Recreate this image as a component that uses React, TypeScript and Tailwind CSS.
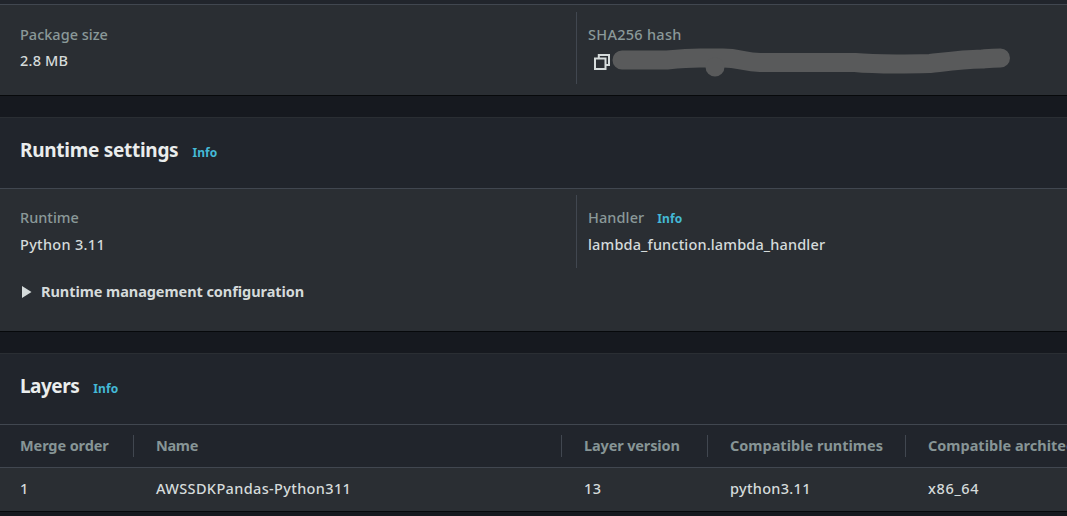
import type { ReactNode } from "react";

function Info({ className = "" }: { className?: string }) {
  return (
    <a className={`text-[12px] leading-4 font-bold tracking-[0.1px] text-[#44b9d6] ${className}`} href="#info">
      Info
    </a>
  );
}

function Label({ children, className = "" }: { children: ReactNode; className?: string }) {
  return <span className={`leading-[22px] text-[#8a9999] ${className}`}>{children}</span>;
}

function Header({ title, className }: { title: string; className: string }) {
  return (
    <header className="flex h-[72px] items-baseline border-t border-b border-t-[#2a2e33] border-b-[#414750] bg-[#21252c] pt-[17px] pl-5">
      <h2 className={`text-[19px] leading-[30px] font-bold text-[#eaeded] ${className}`}>{title}</h2>
      <Info className="ml-[14px]" />
    </header>
  );
}

function CopyIcon() {
  return (
    <svg className="mt-[5px] ml-[6px] block h-4 w-4 shrink-0" viewBox="0 0 16 16" fill="none" stroke="#d5dbdb" strokeWidth="2">
      <path d="M1 4.500h10.500v10.500H1zM4.800 4.500V1h10.200v10h-3.500" />
    </svg>
  );
}

function Redaction() {
  return (
    <svg className="mt-px ml-[2px] block h-[30px] w-[400px] shrink-0" viewBox="612 47 400 30" fill="none">
      <path
        d="M622 60H667C682 58.500 690 58 700 58H723C739 58 744 62 760 62.500H855C870 64 908 64 930 63.500C948 61.500 962 59.500 982 59C988 58.500 992 58 1000.500 58"
        stroke="#595a5b"
        strokeWidth="19"
        strokeLinecap="round"
        strokeLinejoin="round"
      />
      <circle cx="715" cy="67" r="9.500" fill="#595a5b" />
    </svg>
  );
}

const columns = [
  { title: "Merge order", value: "1", cell: "w-[134px] pl-5", head: "tracking-[-0.1px]", text: "" },
  { title: "Name", value: "AWSSDKPandas-Python311", cell: "w-[428px] pl-[22px]", head: "tracking-[-0.3px]", text: "tracking-[0.35px]" },
  { title: "Layer version", value: "13", cell: "w-[146px] pl-[22px]", head: "tracking-[-0.14px]", text: "tracking-[0.4px]" },
  { title: "Compatible runtimes", value: "python3.11", cell: "w-[198px] pl-[22px]", head: "", text: "tracking-[0.3px]" },
  { title: "Compatible architectures", value: "x86_64", cell: "w-[220px] pl-[22px]", head: "", text: "tracking-[0.65px]" },
];

export default function App() {
  return (
    <main className="h-[516px] w-[1067px] overflow-hidden bg-[#16191f] font-['Noto_Sans',sans-serif] text-[14.5px] leading-[22px] font-medium text-[#d5dbdb]">
      <section className="mb-[21px] h-24 border-b border-[#07090b] bg-[#2a2e33]">
        <div className="h-[5px] border-b border-[#414750] bg-[#21252c]" />
        <div className="flex pt-[7px]">
          <div className="flex h-[72px] w-[576px] flex-col pt-[11px] pl-5">
            <Label>Package size</Label>
            <span className="mt-[4px] tracking-[0.2px]">2.8 MB</span>
          </div>
          <div className="flex h-[72px] flex-col border-l border-[#414750] pt-[11px] pl-[11px]">
            <Label className="tracking-[0.28px]">SHA256 hash</Label>
            <div className="flex pt-px">
              <div className="pt-[3px]"><CopyIcon /></div>
              <Redaction />
            </div>
          </div>
        </div>
      </section>

      <section className="mb-[21px] h-[215px] border-b border-[#07090b] bg-[#2a2e33]">
        <Header title="Runtime settings" className="tracking-[-0.28px]" />
        <div className="flex pt-[6px]">
          <div className="flex h-[73px] w-[576px] flex-col pt-[11px] pl-5">
            <Label>Runtime</Label>
            <span className="mt-[5px] tracking-[0.3px]">Python 3.11</span>
          </div>
          <div className="flex h-[73px] flex-col border-l border-[#414750] pt-[11px] pl-[11px]">
            <div className="flex items-baseline">
              <Label className="tracking-[0.1px]">Handler</Label>
              <Info className="ml-[13px]" />
            </div>
            <span className="mt-[5px] tracking-[0.15px]">lambda_function.lambda_handler</span>
          </div>
        </div>
        <div className="mt-[13px] flex h-[22px] items-center pl-[22px]">
          <svg className="mr-[9px] block h-3 w-[10px]" viewBox="0 0 10 12">
            <path d="M0 0L9.500 6L0 12Z" fill="#d5dbdb" />
          </svg>
          <span className="mb-[2px] font-bold tracking-[-0.06px]">Runtime management configuration</span>
        </div>
      </section>

      <section className="h-[159px] border-b border-[#07090b] bg-[#2a2e33]">
        <Header title="Layers" className="tracking-[-0.5px]" />
        <div className="flex h-[43px] w-max items-center border-b border-[#414750] bg-[#21252c]">
          {columns.map((c, i) => (
            <div
              key={c.title}
              className={`h-[22px] shrink-0 leading-5 font-bold whitespace-nowrap text-[#879596] ${c.cell} ${i < 4 ? "border-r border-[#414750]" : ""}`}
            >
              <span className={c.head}>{c.title}</span>
            </div>
          ))}
        </div>
        <div className="flex h-10 w-max items-center">
          {columns.map((c) => (
            <div key={c.title} className={`shrink-0 whitespace-nowrap ${c.cell}`}>
              <span className={c.text}>{c.value}</span>
            </div>
          ))}
        </div>
      </section>
    </main>
  );
}
